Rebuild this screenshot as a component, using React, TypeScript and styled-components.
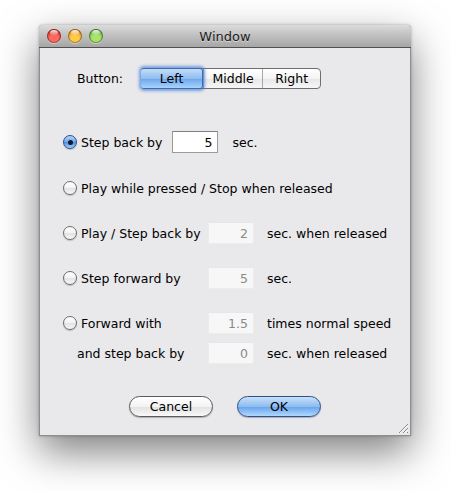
import React from "react";
import styled, { createGlobalStyle } from "styled-components";

const Global = createGlobalStyle`
  html, body { margin: 0; padding: 0; background: #ffffff; }
  body { font-family: "DejaVu Sans", "Liberation Sans", sans-serif; font-size: 12.5px; color: #000; }
`;

const Page = styled.div`
  width: 451px;
  height: 491px;
  padding: 25px 0 0 39px;
  box-sizing: border-box;
`;

const Window = styled.div`
  width: 372px;
  height: 411px;
  display: flex;
  flex-direction: column;
  background: #e9e8eb;
  border: 1px solid #8e8e8e;
  border-top: none;
  box-sizing: border-box;
  border-radius: 4px 4px 0 0;
  box-shadow: 0 16px 40px rgba(0, 0, 0, 0.5), 0 0 3px rgba(0, 0, 0, 0.3);
  position: relative;
`;

const TitleBar = styled.div`
  height: 22px;
  flex: none;
  display: grid;
  grid-template-columns: 1fr auto 1fr;
  align-items: center;
  background: linear-gradient(#dcdcdc, #c4c4c4 40%, #a6a6a6);
  border-bottom: 1px solid #505050;
  border-radius: 4px 4px 0 0;
  padding: 0 8px;
  margin: 0 -1px;
`;

const Lights = styled.div`
  display: flex;
  gap: 7px;
`;

const Light = styled.div<{ $c: string; $d: string }>`
  width: 14px;
  height: 14px;
  border-radius: 50%;
  background: radial-gradient(circle at 50% 75%, ${(p) => p.$c} 0%, ${(p) => p.$c} 35%, ${(p) => p.$d} 100%);
  box-shadow: inset 0 0 0 1px rgba(0, 0, 0, 0.35), 0 1px 0 rgba(255, 255, 255, 0.4);
  position: relative;
  &::after {
    content: "";
    position: absolute;
    left: 3px;
    top: 1px;
    width: 8px;
    height: 5px;
    border-radius: 50%;
    background: linear-gradient(rgba(255, 255, 255, 0.9), rgba(255, 255, 255, 0.1));
  }
`;

const Title = styled.div`
  font-size: 13px;
  color: #1a1a1a;
  text-shadow: 0 1px 0 rgba(255, 255, 255, 0.5);
`;

const Body = styled.div`
  flex: 1;
  display: flex;
  flex-direction: column;
  position: relative;
`;

const SegRow = styled.div`
  display: flex;
  align-items: center;
  margin: 20px 0 0 37px;
  gap: 18px;
`;

const Segmented = styled.div`
  display: flex;
  height: 21px;
  border: 1px solid #6e6e6e;
  border-radius: 4px;
  box-sizing: border-box;
  background: linear-gradient(#ffffff, #f4f4f4 50%, #e6e6e6 51%, #f6f6f6);
  position: relative;
`;

const Seg = styled.div<{ $w: number; $active?: boolean }>`
  width: ${(p) => p.$w}px;
  display: flex;
  align-items: center;
  justify-content: center;
  border-left: 1px solid #a8a8a8;
  box-sizing: border-box;
  &:first-child { border-left: none; }
  ${(p) =>
    p.$active
      ? `
    background: linear-gradient(#c4dcf7, #8fbdf0 50%, #6aa6ec 51%, #a9d3fb);
    border-radius: 3px;
    margin: -1px 0 -1px -1px;
    border: 1px solid #3d6cb0;
    box-shadow: 0 0 3px 2px rgba(70, 130, 220, 0.7);
    position: relative;
    z-index: 1;
  `
      : ""}
`;

const Rows = styled.div`
  display: flex;
  flex-direction: column;
  padding-left: 23px;
`;

const Row = styled.div<{ $top: number }>`
  display: flex;
  align-items: center;
  height: 22px;
  margin-top: ${(p) => p.$top}px;
`;

const Label = styled.label<{ $w?: number; $indent?: number }>`
  display: flex;
  align-items: center;
  gap: 4px;
  ${(p) => (p.$w ? `width: ${p.$w}px; flex: none;` : "")}
  padding-left: ${(p) => p.$indent || 0}px;
  box-sizing: border-box;
  white-space: nowrap;
`;

const Radio = styled.span<{ $on?: boolean }>`
  width: 14px;
  height: 14px;
  box-sizing: border-box;
  border-radius: 50%;
  flex: none;
  display: flex;
  align-items: center;
  justify-content: center;
  border: 1px solid ${(p) => (p.$on ? "#2a4f8f" : "#6c6c6c")};
  background: ${(p) =>
    p.$on
      ? "linear-gradient(#b7d3f5, #6ea5e8 50%, #4c8de0 51%, #a5d0fb)"
      : "linear-gradient(#ffffff, #f2f2f2 50%, #e2e2e2 51%, #f7f7f7)"};
  box-shadow: 0 1px 1px rgba(0, 0, 0, 0.2);
  &::after {
    content: "";
    width: 5px;
    height: 5px;
    border-radius: 50%;
    background: #0c1a33;
    display: ${(p) => (p.$on ? "block" : "none")};
  }
`;

const Field = styled.div<{ $disabled?: boolean; $gapL: number }>`
  width: 46px;
  height: 22px;
  box-sizing: border-box;
  margin-left: ${(p) => p.$gapL}px;
  display: flex;
  align-items: center;
  justify-content: flex-end;
  padding-right: 5px;
  background: ${(p) => (p.$disabled ? "#f7f7f8" : "#ffffff")};
  color: ${(p) => (p.$disabled ? "#8a8a8a" : "#000")};
  border: 1px solid ${(p) => (p.$disabled ? "#ececee" : "#9a9a9a")};
  border-top-color: ${(p) => (p.$disabled ? "#e6e6e8" : "#7f7f7f")};
`;

const Suffix = styled.span<{ $gapL: number }>`
  margin-left: ${(p) => p.$gapL}px;
  white-space: nowrap;
`;

const Buttons = styled.div`
  display: flex;
  justify-content: center;
  gap: 24px;
  margin-top: 32px;
`;

const PushButton = styled.div<{ $primary?: boolean }>`
  width: 84px;
  height: 21px;
  box-sizing: border-box;
  border-radius: 11px;
  display: flex;
  align-items: center;
  justify-content: center;
  border: 1px solid ${(p) => (p.$primary ? "#2f4f8a" : "#5a5a5a")};
  background: ${(p) =>
    p.$primary
      ? "linear-gradient(#c9e0f9, #8dbcf0 50%, #66a3ec 51%, #b0d8fd)"
      : "linear-gradient(#ffffff, #f3f3f3 50%, #e1e1e1 51%, #f8f8f8)"};
  box-shadow: 0 1px 1px rgba(0, 0, 0, 0.25);
`;

const Grip = styled.svg`
  position: absolute;
  right: 1px;
  bottom: 1px;
`;

export default function App() {
  return (
    <>
      <Global />
      <Page>
        <Window>
          <TitleBar>
            <Lights>
              <Light $c="#ff6a5e" $d="#b3100c" />
              <Light $c="#ffc94a" $d="#c86a07" />
              <Light $c="#a7e46a" $d="#3d8a1a" />
            </Lights>
            <Title>Window</Title>
            <div />
          </TitleBar>
          <Body>
            <SegRow>
              <span>Button:</span>
              <Segmented>
                <Seg $w={62} $active>Left</Seg>
                <Seg $w={59}>Middle</Seg>
                <Seg $w={58}>Right</Seg>
              </Segmented>
            </SegRow>
            <Rows>
              <Row $top={42}>
                <Label>
                  <Radio $on />
                  Step back by
                </Label>
                <Field $gapL={10}>5</Field>
                <Suffix $gapL={14}>sec.</Suffix>
              </Row>
              <Row $top={24}>
                <Label>
                  <Radio />
                  Play while pressed / Stop when released
                </Label>
              </Row>
              <Row $top={23}>
                <Label $w={145}>
                  <Radio />
                  Play / Step back by
                </Label>
                <Field $disabled $gapL={0}>2</Field>
                <Suffix $gapL={13}>sec. when released</Suffix>
              </Row>
              <Row $top={23}>
                <Label $w={145}>
                  <Radio />
                  Step forward by
                </Label>
                <Field $disabled $gapL={0}>5</Field>
                <Suffix $gapL={13}>sec.</Suffix>
              </Row>
              <Row $top={23}>
                <Label $w={145}>
                  <Radio />
                  Forward with
                </Label>
                <Field $disabled $gapL={0}>1.5</Field>
                <Suffix $gapL={13}>times normal speed</Suffix>
              </Row>
              <Row $top={8}>
                <Label $w={145} $indent={14}>
                  and step back by
                </Label>
                <Field $disabled $gapL={0}>0</Field>
                <Suffix $gapL={13}>sec. when released</Suffix>
              </Row>
            </Rows>
            <Buttons>
              <PushButton>Cancel</PushButton>
              <PushButton $primary>OK</PushButton>
            </Buttons>
            <Grip width="12" height="12" viewBox="0 0 12 12">
              <path d="M11 2 L2 11 M11 6 L6 11 M11 10 L10 11" stroke="#888" strokeWidth="1" />
              <path d="M11 3 L3 11 M11 7 L7 11" stroke="#fff" strokeWidth="1" opacity="0.7" />
            </Grip>
          </Body>
        </Window>
      </Page>
    </>
  );
}
